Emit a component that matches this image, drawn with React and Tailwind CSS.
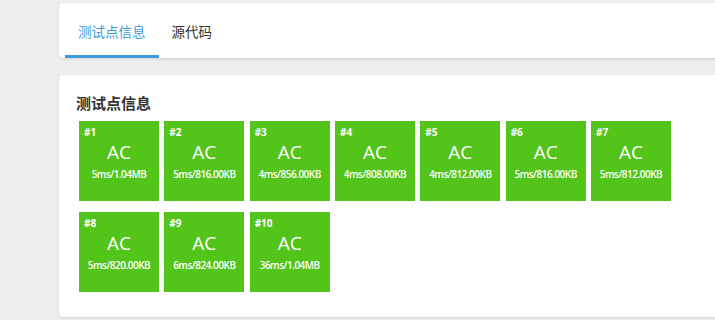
import React from "react";

const cases = [
  ["#1", "5ms/1.04MB"],
  ["#2", "5ms/816.00KB"],
  ["#3", "4ms/856.00KB"],
  ["#4", "4ms/808.00KB"],
  ["#5", "4ms/812.00KB"],
  ["#6", "5ms/816.00KB"],
  ["#7", "5ms/812.00KB"],
  ["#8", "5ms/820.00KB"],
  ["#9", "6ms/824.00KB"],
  ["#10", "36ms/1.04MB"],
];

function Box({ id, stat }) {
  return (
    <div className="w-[80px] h-[80px] bg-[#52c41a] text-white flex flex-col">
      <div className="pt-[4px] pl-[5px] text-[10px] leading-[14px] font-bold">{id}</div>
      <div className="mt-[1px] text-center text-[19px] leading-[24px]">AC</div>
      <div className="mt-[3px] text-center text-[10px] leading-[14px] font-semibold tracking-[-0.5px]">{stat}</div>
    </div>
  );
}

export default function App() {
  return (
    <div
      className="w-[715px] h-[320px] overflow-hidden bg-[#eeeeee] pl-[59px] pt-[3px]"
      style={{ fontFamily: '"Open Sans", "Noto Sans CJK SC", sans-serif' }}
    >
      <div className="w-[680px] h-[55px] bg-white rounded-[4px] shadow-[0_1px_3px_rgba(0,0,0,0.12)] flex pl-[6px]">
        <div className="h-[55px] px-[13px] pt-[18px] text-[13.5px] leading-[20px] text-[#3d9bdc] border-b-[3px] border-[#3d9bdc]" style={{ fontFamily: '"Noto Sans CJK SC", sans-serif' }}>
          测试点信息
        </div>
        <div className="h-[55px] px-[13px] pt-[18px] text-[13.5px] leading-[20px] text-[#333333]" style={{ fontFamily: '"Noto Sans CJK SC", sans-serif' }}>
          源代码
        </div>
      </div>
      <div className="mt-[17px] w-[680px] h-[242px] bg-white rounded-[4px] shadow-[0_1px_3px_rgba(0,0,0,0.12)] pt-[18px] pl-[17px]">
        <div className="text-[15px] leading-[20px] font-bold text-[#333333]" style={{ fontFamily: '"Noto Sans CJK SC", sans-serif' }}>
          测试点信息
        </div>
        <div className="mt-[8px] ml-[3px] w-[620px] flex flex-wrap gap-x-[5.33px] gap-y-[11px]">
          {cases.map(([id, stat]) => (
            <Box key={id} id={id} stat={stat} />
          ))}
        </div>
      </div>
    </div>
  );
}
